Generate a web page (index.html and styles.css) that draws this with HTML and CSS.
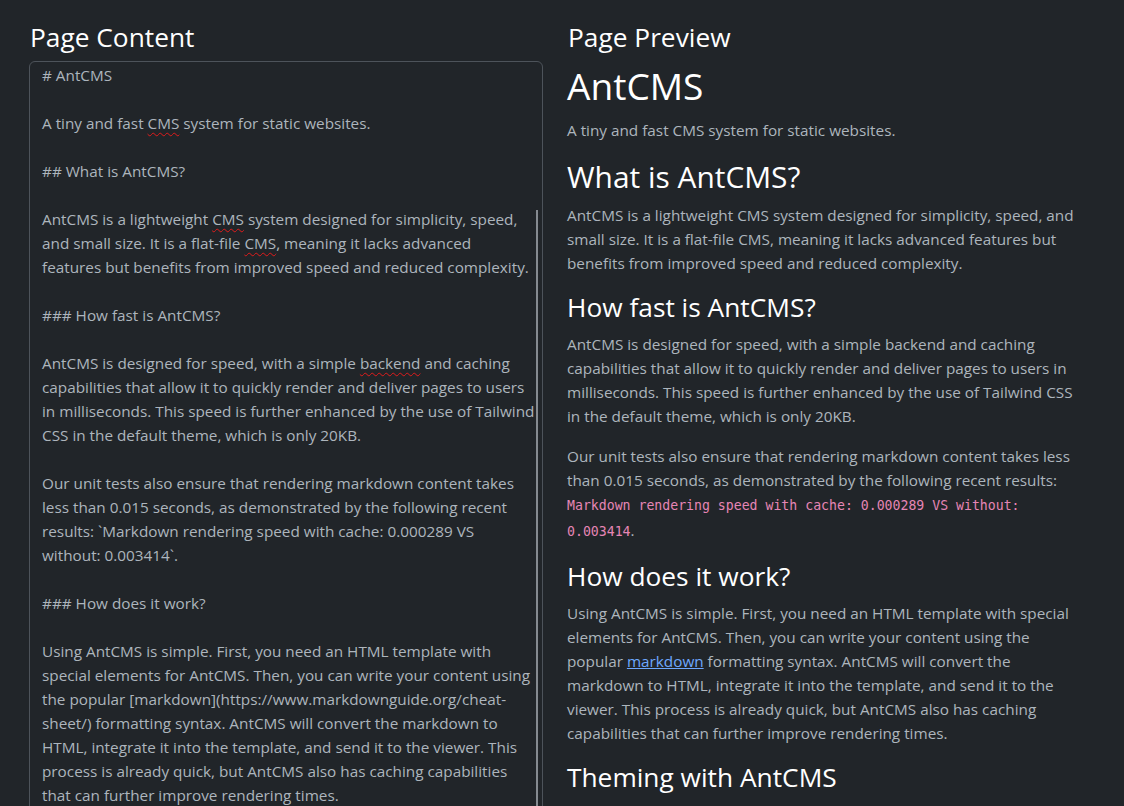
FILE: index.html
```html
<!DOCTYPE html>
<html lang="en">
<head>
<meta charset="utf-8">
<title>AntCMS Page Editor</title>
<link rel="stylesheet" href="styles.css">
</head>
<body>
<div class="layout">
  <section class="column">
    <h3 class="panel-title">Page Content</h3>
    <div class="editor">
<div class="editor-text"># AntCMS

A tiny and fast <span class="typo">CMS</span> system for static websites.

## What is AntCMS?

AntCMS is a lightweight <span class="typo">CMS</span> system designed for simplicity, speed,
and small size. It is a flat-file <span class="typo">CMS</span>, meaning it lacks advanced
features but benefits from improved speed and reduced complexity.

### How fast is AntCMS?

AntCMS is designed for speed, with a simple <span class="typo">backend</span> and caching
capabilities that allow it to quickly render and deliver pages to users
in milliseconds. This speed is further enhanced by the use of Tailwind
CSS in the default theme, which is only 20KB.

Our unit tests also ensure that rendering markdown content takes
less than 0.015 seconds, as demonstrated by the following recent
results: `Markdown rendering speed with cache: 0.000289 VS
without: 0.003414`.

### How does it work?

Using AntCMS is simple. First, you need an HTML template with
special elements for AntCMS. Then, you can write your content using
the popular [markdown](https://www.markdownguide.org/cheat-
sheet/) formatting syntax. AntCMS will convert the markdown to
HTML, integrate it into the template, and send it to the viewer. This
process is already quick, but AntCMS also has caching capabilities
that can further improve rendering times.</div>
      <div class="scroll-thumb"></div>
    </div>
  </section>
  <section class="column">
    <h3 class="panel-title">Page Preview</h3>
    <div class="preview">
      <h1>AntCMS</h1>
      <p>A tiny and fast CMS system for static websites.</p>
      <h2>What is AntCMS?</h2>
      <p>AntCMS is a lightweight CMS system designed for simplicity, speed, and<br>small size. It is a flat-file CMS, meaning it lacks advanced features but<br>benefits from improved speed and reduced complexity.</p>
      <h3>How fast is AntCMS?</h3>
      <p>AntCMS is designed for speed, with a simple backend and caching<br>capabilities that allow it to quickly render and deliver pages to users in<br>milliseconds. This speed is further enhanced by the use of Tailwind CSS<br>in the default theme, which is only 20KB.</p>
      <p>Our unit tests also ensure that rendering markdown content takes less<br>than 0.015 seconds, as demonstrated by the following recent results:<br><code>Markdown rendering speed with cache: 0.000289 VS without:<br>0.003414</code>.</p>
      <h3>How does it work?</h3>
      <p>Using AntCMS is simple. First, you need an HTML template with special<br>elements for AntCMS. Then, you can write your content using the<br>popular <a href="#">markdown</a> formatting syntax. AntCMS will convert the<br>markdown to HTML, integrate it into the template, and send it to the<br>viewer. This process is already quick, but AntCMS also has caching<br>capabilities that can further improve rendering times.</p>
      <h3>Theming with AntCMS</h3>
    </div>
  </section>
</div>
</body>
</html>
```

FILE: styles.css
```css
html, body {
  margin: 0;
  height: 806px;
  overflow: hidden;
  background: #212529;
}

body {
  font-family: "Open Sans", "Noto Sans", sans-serif;
  font-size: 15.3px;
  line-height: 24px;
  color: #adb5bd;
}

.layout {
  display: flex;
  gap: 24px;
  padding: 20px 0 0 29px;
}

.column {
  width: 514px;
  flex: none;
}

h1, h2, h3 {
  margin: 0 0 7px;
  padding-top: 1px;
  font-weight: 500;
  color: #ffffff;
}

.preview h1, .preview h2, .preview h3 {
  padding-top: 2px;
  margin-bottom: 6px;
}

h1 {
  font-size: 37.1px;
  line-height: 46.6px;
}

h2 {
  font-size: 29.9px;
  line-height: 37.6px;
}

h3 {
  font-size: 26.3px;
  line-height: 33px;
}

.panel-title {
  margin-left: 1px;
}

.editor {
  position: relative;
  height: 780px;
  border: 1px solid #4d535a;
  border-radius: 6px;
  padding: 1px 12px 0;
  overflow: hidden;
}

.editor-text {
  white-space: pre;
  color: #adb5bd;
}

.typo {
  text-decoration: underline wavy #e01b1b;
  text-decoration-thickness: 1px;
  text-underline-offset: 3px;
}

.scroll-thumb {
  position: absolute;
  right: 4px;
  top: 148px;
  bottom: 0;
  width: 2px;
  background: #858a90;
}

.preview p {
  margin: 0 0 14px;
  padding-top: 2px;
}

.preview code {
  font-family: "DejaVu Sans Mono", "Liberation Mono", monospace;
  font-size: 13.2px;
  line-height: 24px;
  color: #e685b5;
}

.preview a {
  color: #6ea8fe;
  text-decoration: underline;
}
```
